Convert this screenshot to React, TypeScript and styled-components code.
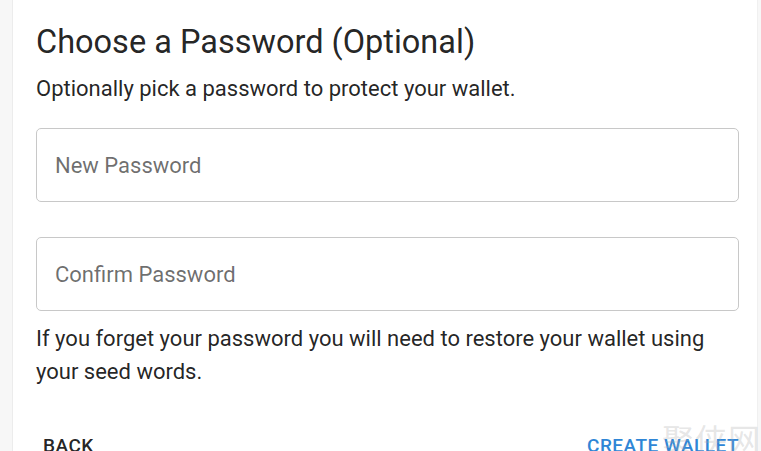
import React from "react";
import styled, { createGlobalStyle } from "styled-components";

const Global = createGlobalStyle`
  html, body { margin: 0; padding: 0; background: #f7f7f7; }
  body { font-family: Roboto, "Noto Sans", Arial, sans-serif; overflow: hidden; }
`;

const Page = styled.div`
  display: flex;
  height: 451px;
  padding-left: 12px;
  position: relative;
  overflow: hidden;
`;

const Card = styled.div`
  flex: 0 0 746px;
  background: #ffffff;
  border-left: 1px solid #ececec;
  border-right: 1px solid #f0f0f0;
  padding: 21px 18px 0 23px;
  box-sizing: border-box;
  display: flex;
  flex-direction: column;
  & > * { flex-shrink: 0; }
`;

const Title = styled.h1`
  margin: 0;
  font-size: 32.5px;
  line-height: 43px;
  font-weight: 400;
  color: rgba(0, 0, 0, 0.87);
`;

const Text = styled.p<{ $top: number }>`
  margin: ${(p) => p.$top}px 0 0;
  font-size: 22px;
  line-height: 33px;
  font-weight: 400;
  color: rgba(0, 0, 0, 0.87);
`;

const Field = styled.div<{ $top: number }>`
  margin-top: ${(p) => p.$top}px;
  height: 74px;
  box-sizing: border-box;
  border: 1.3px solid #c8c8c8;
  border-radius: 5px;
  display: flex;
  align-items: center;
  padding: 0 18px;
`;

const Placeholder = styled.span`
  font-size: 22px;
  color: rgba(0, 0, 0, 0.58);
`;

const Actions = styled.div`
  margin-top: 33px;
  display: flex;
  justify-content: space-between;
  margin-left: -3px;
  margin-right: -10px;
`;

const Button = styled.button<{ $primary?: boolean }>`
  border: none;
  background: transparent;
  padding: 8px 10px;
  font-family: Roboto, Arial, sans-serif;
  font-size: 19px;
  font-weight: 500;
  line-height: 33px;
  letter-spacing: 0.5px;
  text-transform: uppercase;
  color: ${(p) => (p.$primary ? "#2f86d6" : "rgba(0,0,0,0.87)")};
`;

const Watermark = styled.span`
  position: absolute;
  right: 0px;
  bottom: -10px;
  font-family: "Noto Sans CJK SC", sans-serif;
  font-size: 32px;
  color: rgba(170, 170, 170, 0.3);
  letter-spacing: 1px;
`;

export default function App() {
  return (
    <>
      <Global />
      <Page>
        <Card>
          <Title>Choose a Password (Optional)</Title>
          <Text $top={8}>Optionally pick a password to protect your wallet.</Text>
          <Field $top={23}>
            <Placeholder>New Password</Placeholder>
          </Field>
          <Field $top={35}>
            <Placeholder>Confirm Password</Placeholder>
          </Field>
          <Text $top={11}>
            If you forget your password you will need to restore your wallet using your seed words.
          </Text>
          <Actions>
            <Button>Back</Button>
            <Button $primary>Create Wallet</Button>
          </Actions>
        </Card>
        <Watermark>聚侠网</Watermark>
      </Page>
    </>
  );
}
